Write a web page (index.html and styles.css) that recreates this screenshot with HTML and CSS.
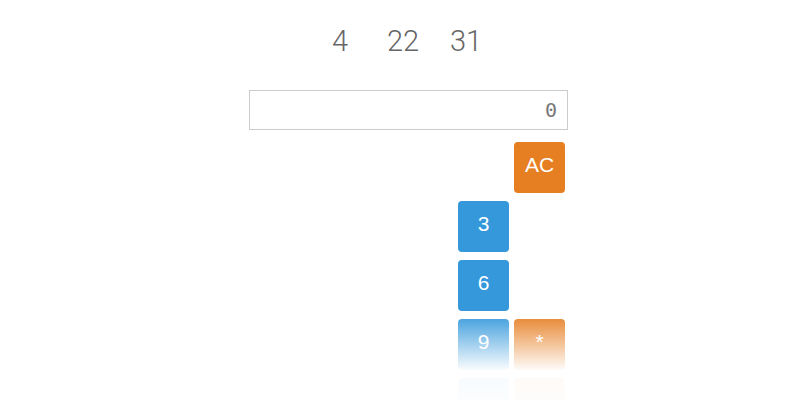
FILE: index.html
```html
<!DOCTYPE html>
<html lang="en">
<head>
  <meta charset="UTF-8">
  <title>Calculator</title>
  <link rel="stylesheet" href="styles.css">
</head>
<body>
  <div class="scores">
    <span>4</span>
    <span>22</span>
    <span>31</span>
  </div>

  <div class="calc">
    <div class="display">0</div>
    <div class="keys">
      <button class="key op col4">AC</button>
      <button class="key num col3">3</button>
      <button class="key num col3">6</button>
      <button class="key num col3">9</button>
      <button class="key op col4">*</button>
      <button class="key num col3"></button>
      <button class="key op col4"></button>
    </div>
  </div>

  <div class="fade"></div>
</body>
</html>
```

FILE: styles.css
```css
* {
  box-sizing: border-box;
  margin: 0;
  padding: 0;
}

body {
  background-color: #fff;
  font-family: Roboto, "Liberation Sans", sans-serif;
  height: 400px;
  overflow: hidden;
  display: flex;
  flex-direction: column;
  align-items: center;
}

.scores {
  margin-top: 24px;
  display: flex;
  font-size: 29px;
  font-weight: 300;
  color: #666;
  line-height: 34px;
  padding-left: 6px;
}

.scores span {
  width: 63px;
  text-align: center;
}

.calc {
  margin-top: 32px;
  width: 319px;
  margin-left: 17px;
}

.display {
  height: 40px;
  border: 1px solid #ccc;
  font-family: "DejaVu Sans Mono", monospace;
  font-size: 20px;
  color: #777;
  text-align: right;
  padding: 7px 10px 0 0;
}

.keys {
  margin-top: 12px;
  display: grid;
  grid-template-columns: repeat(4, 51px);
  justify-content: end;
  column-gap: 5px;
  row-gap: 8px;
  padding-right: 3px;
}

.key {
  height: 51px;
  border: none;
  border-radius: 4px;
  padding-bottom: 5px;
  color: #fff;
  font-family: "Liberation Sans", Arial, sans-serif;
  font-size: 21px;
}

.num {
  background-color: #3498db;
}

.op {
  background-color: #e67e22;
}

.col3 {
  grid-column: 3;
}

.col4 {
  grid-column: 4;
}

.fade {
  position: absolute;
  left: 0;
  right: 0;
  top: 312px;
  height: 88px;
  background: linear-gradient(to bottom, rgba(255, 255, 255, 0) 0%, rgba(255, 255, 255, 0.96) 65%, rgba(255, 255, 255, 0.98) 100%);
}
```
